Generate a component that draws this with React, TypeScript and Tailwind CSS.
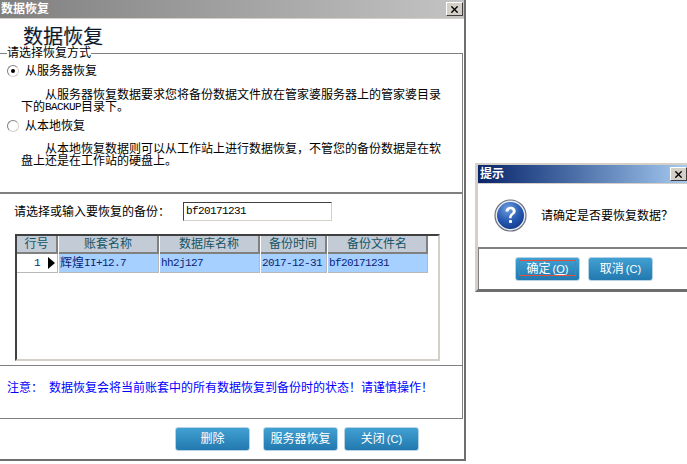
import type { ReactNode } from "react";
import { X } from "lucide-react";

const cjk = "font-['Liberation_Sans','Noto_Sans_CJK_SC',sans-serif]";
const latin = "font-['Liberation_Mono','Noto_Sans_CJK_SC',monospace] text-[11px] tracking-[-0.6px]";

const columns = [
  { title: "账套名称", value: "辉煌II+12.7", width: "w-[100px]" },
  { title: "数据库名称", value: "hh2j127", width: "w-[100px]" },
  { title: "备份时间", value: "2017-12-31", width: "w-[66px]" },
  { title: "备份文件名", value: "bf20171231", width: "w-[100px]" },
];

const CloseBox = () => (
  <div className="w-[17px] h-[14px] bg-[#d4d0c8] border border-t-white border-l-white border-r-[#404040] border-b-[#404040] flex items-center justify-center">
    <X className="w-[11px] h-[11px] text-black" strokeWidth={3} />
  </div>
);

const Radio = ({ checked }: { checked?: boolean }) => (
  <div className="w-3 h-3 rounded-full bg-white border border-t-[#808080] border-l-[#808080] border-r-[#d4d0c8] border-b-[#d4d0c8] flex items-center justify-center">
    {checked && <div className="w-1 h-1 rounded-full bg-black" />}
  </div>
);

const BlueButton = ({ label, width }: { label: ReactNode; width: string }) => (
  <button className={`${width} h-[24px] rounded-[3px] bg-gradient-to-b from-[#41a0d2] to-[#2279af] border border-[#b5d3e6] text-white text-[12px] flex items-center justify-center gap-[2px]`}>
    {label}
  </button>
);

const QuestionIcon = () => (
  <svg width="33" height="33" viewBox="0 0 33 33">
    <defs>
      <radialGradient id="qfill" cx="40%" cy="25%" r="80%">
        <stop offset="0%" stopColor="#6f9fe0" />
        <stop offset="55%" stopColor="#2a5cb4" />
        <stop offset="100%" stopColor="#123a8c" />
      </radialGradient>
    </defs>
    <circle cx="16.5" cy="16.5" r="15.5" fill="#e8ebf0" stroke="#6b7280" strokeWidth="1.2" />
    <circle cx="16.5" cy="16.5" r="13.5" fill="url(#qfill)" />
    <path d="M11.5 12.5c0-3 2.2-4.7 5.2-4.7 3 0 5 1.7 5 4.2 0 3.6-4.2 3.6-4.2 7.2h-2.4c0-4.7 3.6-4.7 3.6-7 0-1.1-.8-1.9-2-1.9-1.3 0-2.1.9-2.2 2.2z" fill="#fff" />
    <rect x="15" y="21" width="3" height="3" rx="0.8" fill="#fff" />
  </svg>
);

export default function App() {
  return (
    <div className={`w-[687px] h-[464px] bg-white flex overflow-hidden text-[12px] text-black ${cjk}`}>
      {/* 数据恢复 window */}
      <div className="w-[466px] h-[461px] flex flex-col border-r-2 border-b-2 border-r-[#6e6e6e] border-b-[#6e6e6e]">
        <div className="h-[19px] shrink-0 pl-[1px] pr-[1px] bg-gradient-to-r from-[#808080] to-[#c4c4c4] border-b border-[#d4d0c8] flex items-center justify-between">
          <span className="text-white font-bold text-[12px] leading-none">数据恢复</span>
          <CloseBox />
        </div>
        <div className="h-[28px] shrink-0 pl-[23px] pt-[8px] text-[20px] leading-[20px] text-[#101828] [text-shadow:1px_0_0_rgba(59,130,196,0.35)]">
          数据恢复
        </div>

        <fieldset className="h-[145px] shrink-0 mr-[1px] border-t border-r border-[#808080] pl-[7px]">
          <legend className="px-0 text-[12px] leading-[12px]">请选择恢复方式</legend>
          <div className="flex items-center gap-[6px] mt-[6px] h-[12px] leading-[12px]">
            <Radio checked />
            <span>从服务器恢复</span>
          </div>
          <div className="pl-[14px] mt-[12px] leading-[12px] whitespace-nowrap">
            <div className="pl-[24px]">从服务器恢复数据要求您将备份数据文件放在管家婆服务器上的管家婆目录</div>
            <div className="flex items-center h-[12px]">
              下的<span className={latin}>BACKUP</span>目录下。
            </div>
          </div>
          <div className="flex items-center gap-[6px] mt-[7px] h-[12px] leading-[12px]">
            <Radio />
            <span>从本地恢复</span>
          </div>
          <div className="pl-[14px] mt-[11px] leading-[12px] whitespace-nowrap">
            <div className="pl-[24px]">从本地恢复数据则可以从工作站上进行数据恢复，不管您的备份数据是在软</div>
            <div>盘上还是在工作站的硬盘上。</div>
          </div>
        </fieldset>

        <div className="h-[174px] shrink-0 mr-[1px] border-t-2 border-r border-b border-[#808080] pl-[15px] pt-[8px]">
          <div className="flex items-center h-[19px]">
            <span className="w-[169px] -ml-[1px] text-[12px] leading-none">请选择或输入要恢复的备份：</span>
            <div className={`w-[149px] h-[19px] pl-[2px] flex items-center border border-t-[#404040] border-l-[#404040] border-r-[#d4d0c8] border-b-[#d4d0c8] ${latin}`}>
              bf20171231
            </div>
          </div>
          <div className="mt-[13px] w-[425px] h-[127px] border-2 border-t-[#404040] border-l-[#404040] border-r-[#d4d0c8] border-b-[#d4d0c8]">
            <div className="flex h-[18px] text-[#155564]">
              <div className="w-[41px] bg-[#c3cbd7] border-r-2 border-b-2 border-r-[#808080] border-b-[#808080] flex items-center justify-center">行号</div>
              {columns.map((c) => (
                <div key={c.title} className={`${c.width} ml-[1px] bg-[#c3cbd7] border-r-2 border-b-2 border-r-[#808080] border-b-[#808080] flex items-center justify-center`}>
                  {c.title}
                </div>
              ))}
            </div>
            <div className="flex h-[19px] text-[#0a1f78]">
              <div className="w-[41px] border-r border-b border-[#b8b8b8] flex items-center justify-between pl-[17px] pr-[2px]">
                <span className={latin}>1</span>
                <span className="w-0 h-0 border-y-[6px] border-y-transparent border-l-[7px] border-l-black" />
              </div>
              {columns.map((c, i) => (
                <div key={c.title} className={`${c.width} ml-[1px] pl-[1px] bg-[#a6d0ff] border-r border-b border-[#b8b8b8] flex items-center whitespace-nowrap`}>
                  {i === 0 ? (
                    <span className={`${latin} flex items-center`}>
                      <span className={`${cjk} text-[12px] tracking-normal`}>辉煌</span>II+12.7
                    </span>
                  ) : (
                    <span className={latin}>{c.value}</span>
                  )}
                </div>
              ))}
            </div>
          </div>
        </div>

        <div className="h-[53px] shrink-0 mr-[1px] border-r border-b border-[#808080] pl-[7px] pb-[8px] flex items-center text-[#0000ff] whitespace-nowrap">
          <span className="w-[42px]">注意：</span>
          <span>数据恢复会将当前账套中的所有数据恢复到备份时的状态！请谨慎操作！</span>
        </div>

        <div className="flex pl-[175px] pt-[8px]">
          <BlueButton label="删除" width="w-[75px]" />
          <div className="ml-[13px]"><BlueButton label="服务器恢复" width="w-[75px]" /></div>
          <div className="ml-[6px]">
            <BlueButton label={<><span>关闭</span><span className="text-[11px]">(C)</span></>} width="w-[75px]" />
          </div>
        </div>
      </div>

      {/* 提示 dialog */}
      <div className="flex-1 pt-[163px] pl-[9px]">
        <div className="h-[129px] border-t-2 border-l-[3px] border-b-[3px] border-t-[#d4d0c8] border-l-[#d4d0c8] border-b-[#6e6e6e]">
          <div className="h-[19px] pl-[2px] bg-gradient-to-r from-[#0a246a] to-[#a6caf0] border-b border-[#d4d0c8] flex items-center justify-between">
            <span className="text-white font-bold text-[12px] leading-none">提示</span>
            <CloseBox />
          </div>
          <div className="h-[63px] flex items-center pl-[16px]">
            <QuestionIcon />
            <span className="ml-[14px] leading-none">请确定是否要恢复数据？</span>
          </div>
          <div className="h-[42px] border-t-2 border-l border-[#808080] pl-[36px] pt-[8px] flex">
            <div className="relative">
              <BlueButton label={<><span>确定</span><span className="text-[11px]">(<u>O</u>)</span></>} width="w-[65px]" />
              <div className="absolute left-[4px] top-[3px] w-[57px] h-[16px] border border-[#e0503c]" />
            </div>
            <div className="ml-[8px]">
              <BlueButton label={<><span>取消</span><span className="text-[11px]">(C)</span></>} width="w-[65px]" />
            </div>
          </div>
        </div>
      </div>
    </div>
  );
}
